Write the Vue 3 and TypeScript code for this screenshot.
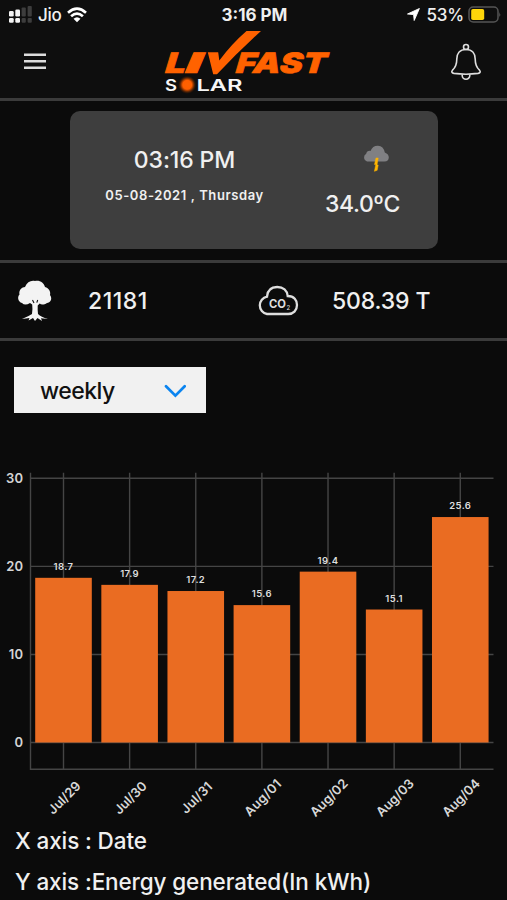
<script setup lang="ts">
interface Reading {
  day: string
  value: number
  span: number
}

const readings: Reading[] = [
  { day: 'Jul/29', value: 18.7, span: 40 },
  { day: 'Jul/30', value: 17.9, span: 40 },
  { day: 'Jul/31', value: 17.2, span: 38 },
  { day: 'Aug/01', value: 15.6, span: 46 },
  { day: 'Aug/02', value: 19.4, span: 47 },
  { day: 'Aug/03', value: 15.1, span: 47 },
  { day: 'Aug/04', value: 25.6, span: 47 },
]
const ticks = [30, 20, 10, 0]

// Plot geometry, in the chart's own pixel units.
const zero = 282.5
const unit = 8.807
const step = 66.13
const yOf = (v: number): number => zero - v * unit
const xOf = (i: number): number => 63.5 + i * step
</script>

<template>
  <main class="screen">
    <header class="top">
      <div class="status">
        <div class="carrier">
          <svg width="25" height="18" viewBox="0 0 25 18">
            <g fill="#f4f4f4">
              <rect x="1" y="5" width="4.7" height="5.6" rx="1.3" />
              <rect x="1" y="12" width="4.7" height="4.8" rx="1.3" />
              <rect x="7.3" y="3.5" width="4.7" height="7.1" rx="1.3" />
              <rect x="7.3" y="12" width="4.7" height="4.8" rx="1.3" />
            </g>
            <g fill="#3d3d3d">
              <rect x="13.6" y="1.5" width="4.2" height="9.1" rx="1" />
              <rect x="13.6" y="12" width="4.2" height="4.8" rx="1" />
              <rect x="19.6" y="0" width="4.2" height="10.6" rx="1" />
              <rect x="19.6" y="12" width="4.2" height="4.8" rx="1" />
            </g>
          </svg>
          <span class="jio">Jio</span>
          <svg class="wifi" width="20" height="16" viewBox="0 0 20 16">
            <g fill="none" stroke="#fff" stroke-width="2.7">
              <path d="M1 5.7Q10-2.3 19 5.7" />
              <path d="M4.1 9.3Q10 4 15.9 9.3" />
            </g>
            <path d="M6.5 11.7Q10 8.6 13.5 11.7L10 15.2Z" fill="#fff" />
          </svg>
        </div>
        <span class="clock">3:16 PM</span>
        <div class="power">
          <svg width="13" height="13" viewBox="0 0 13 13"><path d="M12.4.5L7.2 12.5 6.6 6.6.5 6Z" fill="#fff" stroke="#fff" stroke-linejoin="round" stroke-width=".9" /></svg>
          <span class="percent">53%</span>
          <svg width="33" height="17" viewBox="0 0 33 17">
            <rect x="1" y="1" width="29" height="15" rx="4.2" fill="none" stroke="#555" stroke-width="1.5" />
            <rect x="3.2" y="3" width="13" height="11" rx="1.8" fill="#ffd60a" />
            <path d="M31.4 6Q33 8.5 31.4 11Z" fill="#666" />
          </svg>
        </div>
      </div>
      <nav class="bar">
        <svg class="menu" width="22" height="17" viewBox="0 0 22 17"><path d="M0 1.7H22M0 8.3H22M0 14.8H22" stroke="#dcdcdc" stroke-width="2.5" /></svg>
        <svg class="logo" width="170" height="66" viewBox="162 29 170 66">
          <defs>
            <radialGradient id="sun">
              <stop offset="0" stop-color="#ff6200" />
              <stop offset=".48" stop-color="#ff5e00" />
              <stop offset=".64" stop-color="#a53d00" />
              <stop offset="1" stop-color="#3a1600" stop-opacity="0" />
            </radialGradient>
          </defs>
          <g class="brand">
            <text transform="translate(164.9 72.7) skewX(-5)" textLength="20.5" lengthAdjust="spacingAndGlyphs">L</text>
            <text transform="translate(185 72.7) skewX(-5)" textLength="17" lengthAdjust="spacingAndGlyphs">I</text>
            <text transform="translate(235.5 72.7) skewX(-5)" textLength="90.5" lengthAdjust="spacingAndGlyphs">FAST</text>
          </g>
          <path d="M207.8 52.2H218.2L219.3 60.5Q232 43.5 246.5 31H261Q238 52 217 74.2H213.2Z" fill="#ff6200" />
          <g class="solar">
            <text x="165" y="90.5" textLength="12" lengthAdjust="spacingAndGlyphs">S</text>
            <text x="196.5" y="90.5" textLength="46" lengthAdjust="spacingAndGlyphs">LAR</text>
          </g>
          <circle cx="187.2" cy="84.8" r="9.2" fill="url(#sun)" />
        </svg>
        <svg class="bell" width="32" height="38" viewBox="0 0 32 38">
          <g fill="none" stroke="#dedede" stroke-width="1.6" stroke-linejoin="round">
            <circle cx="16" cy="4" r="2.5" />
            <path d="M16 6.5C9.5 6.5 6.8 11 6.8 16C6.8 21.5 6 24 2.5 27.2C1 28.8 2 30 4 30.4Q16 32 28 30.4C30 30 31 28.8 29.5 27.2C26 24 25.2 21.5 25.2 16C25.2 11 22.5 6.5 16 6.5Z" />
            <path d="M12.2 31.5V32.5A3.8 3.8 0 0 0 19.8 32.5V31.5" />
          </g>
        </svg>
      </nav>
    </header>

    <section class="weather">
      <div class="card">
        <div class="moment">
          <span class="time">03:16 PM</span>
          <span class="date">05-08-2021 , Thursday</span>
        </div>
        <div class="sky">
          <svg width="28" height="29" viewBox="0 0 28 29">
            <path d="M5 17.5A4.2 4.2 0 0 1 4.2 9.8Q4.8 6.5 8.5 6.9Q10.7 1.5 16 1.7Q21.5 2 22.8 8.5Q26.8 10 26.8 13.5Q26.6 17.5 22.5 17.5Z" fill="#808083" />
            <path d="M14 14L12.5 20.5H13.8L12.4 27.3 15.2 26.3 16.2 21H15L16.2 14Z" fill="#ffb400" stroke="#ffb400" stroke-width=".5" />
          </svg>
          <span class="degrees">34.0ºC</span>
        </div>
      </div>
    </section>

    <section class="savings">
      <div class="stat trees">
        <svg width="36" height="42" viewBox="0 0 36 42">
          <path d="M5 23C1 22 0 17 2.5 14.5C1.5 10 5 7 8 7C10 2 14 0 18 1C23 0 27 3 28 7C32 8 34 12 33 15C36 19 33 23 30 23C27 25 24 25 22.7 23.5L20.7 25.5Q20.5 30 21 34Q24 37 31 39L24 38.2 25 41 20.5 38 18 41 16 38 11.5 40.5 12.5 38 5 39Q12 36 15 34Q15.8 29 15.2 24.5L13 23Q8 26 5 23Z" fill="#f3f3f3" />
          <path d="M15.5 20L17 23M20.7 20L19.8 22.7" stroke="#111" stroke-width="1.1" />
        </svg>
        <span class="figure tree-count">21181</span>
      </div>
      <div class="stat">
        <svg width="42" height="31" viewBox="0 0 42 31">
          <path d="M10 29A8.8 8.8 0 0 1 10 11.7C10.5 5 14.7 2 20.2 2C26.2 2 30.2 5.5 30.7 11C37.2 11 40 15.5 40 20C40 25.5 36.2 29 31.2 29Z" fill="none" stroke="#dedede" stroke-width="2.3" />
          <text class="co" x="12" y="23" textLength="17" lengthAdjust="spacingAndGlyphs">CO</text>
          <text class="two" x="29.6" y="25">2</text>
        </svg>
        <span class="figure tons">508.39 T</span>
      </div>
    </section>

    <section class="report">
      <button class="period" type="button">
        <span>weekly</span>
        <svg width="22" height="14" viewBox="0 0 22 14"><path d="M2 2.2L11.4 11.7 20.7 2.2" fill="none" stroke="#0a84f0" stroke-width="2.7" stroke-linecap="round" /></svg>
      </button>

      <svg class="chart" width="507" height="365" viewBox="0 0 507 365">
        <g stroke="#454545" stroke-width="1.4">
          <line v-for="t in ticks" :key="t" x1="30" :y1="yOf(t)" x2="493.5" :y2="yOf(t)" />
          <line v-for="(r, i) in readings" :key="r.day" :x1="xOf(i)" y1="12.8" :x2="xOf(i)" y2="309.5" />
          <path d="M30.5 12.8V309.3H493.5" fill="none" />
        </g>
        <text v-for="t in ticks" :key="t" class="tick" x="23.5" :y="yOf(t) + 4.3" text-anchor="end">{{ t }}</text>
        <g v-for="(r, i) in readings" :key="r.day">
          <rect :x="xOf(i) - 28.3" :y="yOf(r.value)" width="56.6" :height="r.value * unit" fill="#ea6c22" />
          <text class="value" :x="xOf(i)" :y="yOf(r.value) - 8" text-anchor="middle">{{ r.value.toFixed(1) }}</text>
          <text
            class="day"
            :transform="`translate(${xOf(i) + 4} ${341}) rotate(-45)`"
            text-anchor="middle"
            :textLength="r.span"
          >{{ r.day }}</text>
        </g>
      </svg>

      <p class="axis x-axis">X axis : Date</p>
      <p class="axis y-axis">Y axis :Energy generated(In kWh)</p>
    </section>
  </main>
</template>

<style>
body {
  background: #0b0b0b;
}
</style>

<style scoped>
.screen {
  width: 507px;
  height: 900px;
  overflow: hidden;
  background: #0b0b0b;
  color: #f0f0f0;
  font-family: Inter, "Liberation Sans", sans-serif;
  font-weight: 500;
}
svg {
  display: block;
  flex: none;
}
.top {
  box-sizing: border-box;
  height: 101px;
  background: #0e0e0e;
  border-bottom: 3px solid #3b3b3b;
}
.status {
  display: grid;
  grid-template-columns: 1fr auto 1fr;
  align-items: center;
  height: 29px;
  padding: 0 6px 0 8px;
  line-height: 20px;
  white-space: nowrap;
}
.carrier,
.power {
  display: flex;
  align-items: center;
}
.power {
  justify-content: flex-end;
}
.carrier svg:first-child {
  margin-top: 1px;
}
.jio {
  margin-left: 5px;
  font-size: 17px;
  padding-top: 1px;
  letter-spacing: -0.3px;
}
.wifi {
  margin-left: 6px;
}
.clock {
  padding-top: 1px;
  font-size: 17px;
  font-weight: 700;
}
.percent {
  margin: 1px 4px 0 7px;
  font-size: 17px;
  letter-spacing: -0.2px;
}
.bar {
  display: flex;
  height: 69px;
  padding: 0 25px 0 24px;
}
.menu {
  margin-top: 24px;
}
.logo {
  margin-left: 116px;
}
.bell {
  margin: 14px 0 0 auto;
}
.brand {
  fill: #ff6200;
  stroke: #ff6200;
  stroke-width: 0.6px;
  font-size: 28px;
  font-weight: 900;
  font-style: italic;
}
.solar {
  fill: #f7f7f7;
  font-size: 16px;
  font-weight: 600;
}
.weather {
  height: 138px;
  padding: 10px 69px 11px 70px;
  border-bottom: 3px solid #3b3b3b;
}
.card {
  display: flex;
  height: 138px;
  border-radius: 10px;
  background: #3e3e3e;
}
.moment {
  display: flex;
  flex-direction: column;
  align-items: center;
  width: 229px;
  padding-top: 34px;
}
.time {
  font-size: 23px;
  line-height: 30px;
  letter-spacing: -0.1px;
}
.date {
  margin-top: 10px;
  font-size: 13px;
  font-weight: 600;
  line-height: 20px;
  letter-spacing: 0.6px;
  white-space: nowrap;
}
.sky {
  display: flex;
  flex-direction: column;
  align-items: center;
  width: 127px;
  padding-top: 33px;
}
.sky svg {
  margin-left: 27px;
}
.degrees {
  margin-top: 16px;
  font-size: 23px;
  line-height: 30px;
  letter-spacing: -0.4px;
}
.savings {
  display: flex;
  height: 75px;
  border-bottom: 3px solid #3b3b3b;
}
.stat {
  display: flex;
  align-items: center;
}
.trees {
  width: 241px;
  padding-left: 17px;
}
.figure {
  font-size: 23px;
  line-height: 30px;
  white-space: nowrap;
}
.tree-count {
  margin-left: 35px;
  letter-spacing: 0.5px;
}
.tons {
  margin-left: 32px;
  letter-spacing: -0.15px;
}
.stat:not(.trees) svg {
  margin-left: -1px;
  margin-right: 1px;
}
.co {
  fill: #dedede;
  font-size: 12px;
  font-weight: 700;
}
.two {
  fill: #dedede;
  font-size: 6px;
}
.period {
  display: flex;
  align-items: center;
  justify-content: space-between;
  box-sizing: border-box;
  width: 192px;
  height: 46px;
  margin: 26px 0 0 14px;
  padding: 1px 20px 0 26px;
  border: 0;
  background: #f1f1f1;
  color: #111;
  font: 500 23px/30px Inter, "Liberation Sans", sans-serif;
  letter-spacing: -0.5px;
}
.chart {
  margin-top: 47px;
}
.tick {
  fill: #d5d5d5;
  font-size: 13px;
  font-weight: 600;
  letter-spacing: 0.3px;
}
.value {
  fill: #dedede;
  font-size: 9.5px;
  font-weight: 600;
  letter-spacing: 0.4px;
}
.day {
  fill: #d8d8d8;
  font-size: 13px;
  font-weight: 600;
}
.axis {
  margin: 1px 0 0 15px;
  font-size: 22.5px;
  line-height: 30px;
  letter-spacing: -0.12px;
  white-space: nowrap;
}
.y-axis {
  margin-top: 11px;
}
</style>
